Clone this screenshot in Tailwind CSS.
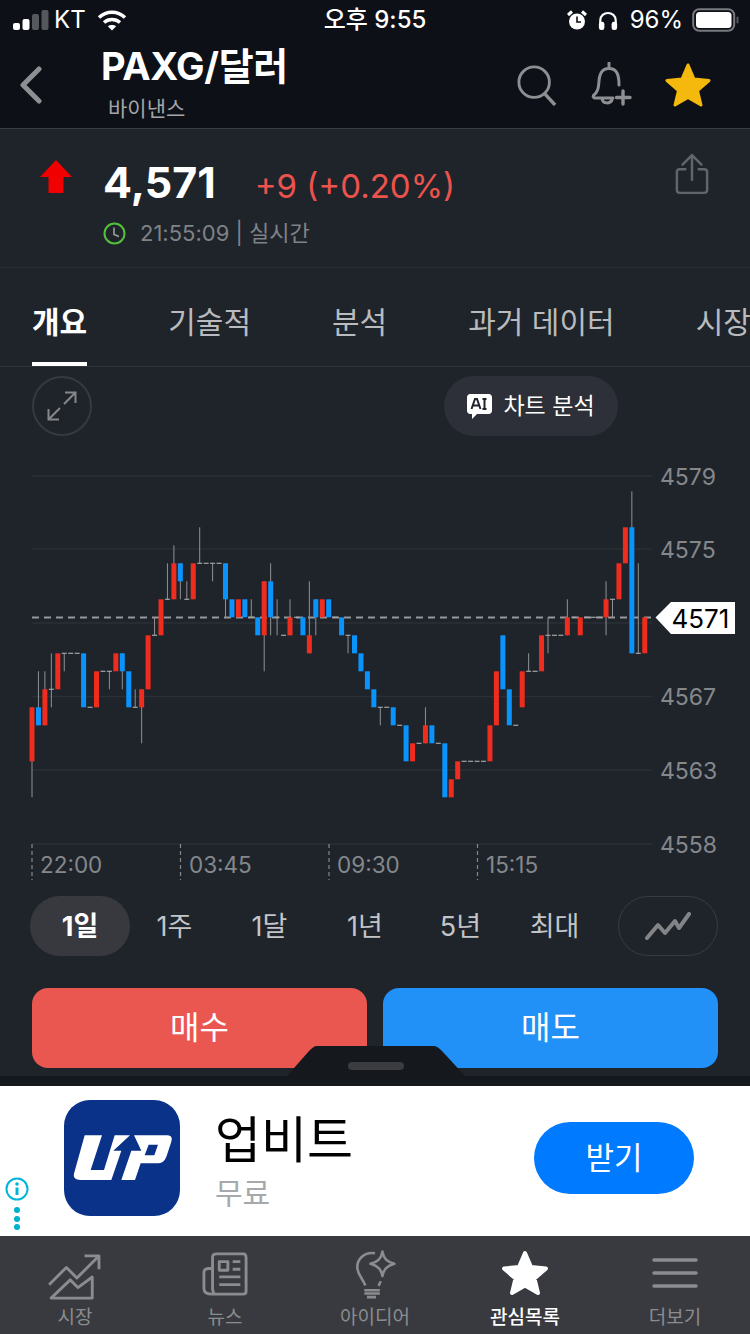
<!DOCTYPE html>
<html lang="ko">
<head>
    <meta charset="UTF-8">
    <meta name="viewport" content="width=device-width, initial-scale=1.0">
    <title>PAXG/달러</title>
    <script src="https://cdn.jsdelivr.net/npm/@tailwindcss/browser@4"></script>
</head>
<body class="bg-[#1f242b] font-['Inter','Noto_Sans_CJK_KR',sans-serif]">
<div class="relative w-[750px] h-[1334px] overflow-hidden flex flex-col bg-[#1f242b]">

    <!-- Status bar + header -->
    <header class="h-[129px] shrink-0 bg-[#0d1017] border-b border-[#3a3d42]">
        <div class="h-[40px] flex items-center justify-between text-white text-[24px] leading-none">
            <div class="w-[260px] flex items-center pl-[13px]">
                <svg width="36" height="20" viewBox="0 0 36 20" fill="#fff"><rect x="0" y="13" width="7" height="7" rx="2"/><rect x="9.5" y="9" width="7" height="11" rx="2"/><rect x="19" y="4" width="7" height="16" rx="2" fill="#55585c"/><rect x="28.5" y="0" width="7" height="20" rx="2" fill="#55585c"/></svg>
                <span class="ml-[5px]">KT</span>
                <svg class="ml-[11px]" width="30" height="21" viewBox="0 0 30 21" fill="none" stroke="#fff" stroke-width="3.4"><path d="M2 7.5C9.5 0.5 20.5 0.5 28 7.5"/><path d="M7 12.5C11.5 8.5 18.5 8.5 23 12.5"/><path d="M15 20.5L10.8 16.3C13 14.5 17 14.5 19.2 16.3Z" fill="#fff" stroke="none"/></svg>
            </div>
            <span class="text-[24px] font-medium">오후 9:55</span>
            <div class="w-[260px] flex items-center justify-end pr-[11px]">
                <svg width="20" height="21" viewBox="0 0 20 21" fill="#fff"><circle cx="10" cy="11.5" r="8"/><path d="M1 5L5 1.5M19 5L15 1.5" stroke="#fff" stroke-width="3"/><path d="M10 6.5V12H14" stroke="#0d1017" stroke-width="1.6" fill="none"/></svg>
                <svg class="ml-[11px]" width="20" height="21" viewBox="0 0 22 21" fill="none"><path d="M2.5 14V10.5C2.5 -0.5 19.5 -0.5 19.5 10.5V14" stroke="#fff" stroke-width="2.4"/><rect x="1" y="12" width="6" height="9" rx="2.5" fill="#fff"/><rect x="15" y="12" width="6" height="9" rx="2.5" fill="#fff"/></svg>
                <span class="ml-[12px]">96%</span>
                <svg class="ml-[9px]" width="47" height="24" viewBox="0 0 47 24" fill="none"><rect x="1.2" y="1.2" width="41" height="21.6" rx="6" stroke="#77797d" stroke-width="2"/><rect x="4" y="4" width="35.5" height="16" rx="3.5" fill="#fff"/><rect x="44.5" y="8.5" width="2" height="7" rx="1" fill="#55585c"/></svg>
            </div>
        </div>
        <div class="relative h-[88px] flex">
            <svg class="mt-[26px] ml-[19px]" width="24" height="38" viewBox="0 0 24 38" fill="none" stroke="#8d8f92" stroke-width="5" stroke-linecap="round" stroke-linejoin="round"><path d="M20 3L4 19L20 35"/></svg>
            <div class="ml-[58px] flex flex-col">
                <span class="text-white text-[38px] leading-[46px] mt-[3px] font-bold tracking-[-0.3px]">PAXG/달러</span>
                <span class="text-[#a3a5a8] text-[21px] leading-[26px] mt-[7px] ml-[7px]">바이낸스</span>
            </div>
            <div class="ml-auto mr-[39px] flex items-start">
                <svg class="mt-[24px]" width="40" height="42" viewBox="0 0 42 44" fill="none" stroke="#8d8f92" stroke-width="3"><circle cx="18" cy="19" r="16"/><path d="M29 31L40 43" stroke-width="3.6"/></svg>
                <svg class="ml-[32px] mt-[22px]" width="44" height="44" viewBox="0 0 44 44" fill="none" stroke="#8d8f92" stroke-width="3" stroke-linecap="round" stroke-linejoin="round"><path d="M20 1V5M6 32C12 27 8 18 12 11C15 5 25 5 28 11C30 15 30 18 30 23M6 32C3 34 4 36 7 36H24M13 37C14 42 21 42 23 38"/><path d="M34 29V42M27.500 35.500H41" stroke-width="3.4"/></svg>
                <svg class="ml-[32px] mt-[22px]" width="46" height="46" viewBox="0 0 46 46" fill="#f5b90d" stroke="#f5b90d" stroke-width="3" stroke-linejoin="round"><path d="M23 3L29 17L44 18.500L32.500 28.500L36 43L23 35.500L10 43L13.500 28.500L2 18.500L17 17Z"/></svg>
            </div>
        </div>
    </header>

    <!-- Quote -->
    <section class="h-[139px] shrink-0 border-b border-[#2a2e35] relative flex">
        <svg class="ml-[40px] mt-[31px]" width="32" height="33" viewBox="0 0 32 33" fill="#f00000"><path d="M16 0L32 17H23.500V33H8.500V17H0Z"/></svg>
        <div class="ml-[31px] flex flex-col">
            <div class="flex items-baseline mt-[25px]">
                <span class="text-white text-[43px] leading-[56px] font-bold">4,571</span>
                <span class="text-[#ec534d] text-[33px] ml-[39px] leading-[56px]">+9 (+0.20%)</span>
            </div>
            <div class="flex items-center mt-[6px]">
                <svg width="23" height="23" viewBox="0 0 23 23" fill="none" stroke="#54c03a" stroke-width="2"><circle cx="11.500" cy="11.500" r="10"/><path d="M11 5.500V12.500L16 14.500" stroke="#9aa09a" stroke-width="1.600"/></svg>
                <span class="ml-[14px] text-[#7f8286] text-[22px] leading-[26px]">21:55:09 | 실시간</span>
            </div>
        </div>
        <svg class="ml-auto mr-[41px] mt-[24px]" width="34" height="42" viewBox="0 0 36 44" fill="none" stroke="#62656a" stroke-width="2.600" stroke-linecap="round" stroke-linejoin="round"><path d="M18 2V28M8 12L18 2L28 12"/><path d="M11 17H5C3 17 2 18 2 20V39C2 41 3 42 5 42H31C33 42 34 41 34 39V20C34 18 33 17 31 17H25"/></svg>
    </section>

    <!-- Tabs -->
    <nav class="h-[99px] shrink-0 border-b border-[#2e3239] flex gap-[81px] pl-[32px] text-[30px] text-[#b9bbbe] whitespace-nowrap overflow-hidden">
        <div class="relative flex items-center text-white font-bold h-full pt-[10px]">개요<span class="absolute left-0 right-0 bottom-0 h-[4px] bg-white"></span></div>
        <div class="flex items-center pt-[10px]">기술적</div>
        <div class="flex items-center pt-[10px]">분석</div>
        <div class="flex items-center pt-[10px]">과거 데이터</div>
        <div class="flex items-center pt-[10px]">시장</div>
    </nav>

    <!-- Chart toolbar -->
    <div class="h-[93px] shrink-0 flex items-start pt-[9px] pl-[32px]">
        <div class="w-[60px] h-[60px] rounded-full border-2 border-[#363a40] flex items-center justify-center">
            <svg width="30" height="30" viewBox="0 0 30 30" fill="none" stroke="#85878a" stroke-width="2"><path d="M18 1.500H28.500V12M28.500 1.500L17 13M12 28.500H1.500V18M1.500 28.500L13 17"/></svg>
        </div>
        <div class="ml-[352px] w-[174px] h-[60px] rounded-full bg-[#2d3038] flex items-center justify-center">
            <svg width="25" height="25" viewBox="0 0 25 25"><path d="M3 0H22C23.500 0 25 1.500 25 3V17C25 18.500 23.500 20 22 20H10L5 25V20H3C1.500 20 0 18.500 0 17V3C0 1.500 1.500 0 3 0Z" fill="#fff"/><path d="M4.500 15L8 5H10L13.500 15M5.800 11.500H12.200M17.500 5V15M15.500 5H19.500M15.500 15H19.500" stroke="#1f242b" stroke-width="2" fill="none"/></svg>
            <span class="ml-[11px] text-white text-[23px] leading-none">차트 분석</span>
        </div>
    </div>

    <!-- Chart -->
    <svg id="chart" class="block shrink-0" width="750" height="420" viewBox="0 460 750 420"></svg>

    <!-- Period selector -->
    <div class="mt-[16px] h-[60px] shrink-0 relative flex text-[27px] text-[#c3c5c8] leading-none">
        <div class="ml-[30px] w-[100px] h-[60px] rounded-[30px] bg-[#38393e] flex items-center justify-center text-white font-bold">1일</div>
        <div class="w-[95px] -ml-[3px] flex items-center justify-center">1주</div>
        <div class="w-[95px] flex items-center justify-center">1달</div>
        <div class="w-[96px] flex items-center justify-center">1년</div>
        <div class="w-[95px] flex items-center justify-center">5년</div>
        <div class="w-[93px] flex items-center justify-center">최대</div>
        <div class="ml-auto mr-[32px] w-[100px] h-[60px] rounded-[30px] border border-[#383b41] flex items-center justify-center">
            <svg width="46" height="28" viewBox="0 0 46 28" fill="none" stroke="#828487" stroke-width="4" stroke-linecap="round" stroke-linejoin="round"><path d="M2 26L13 13L20 21L30 9L34 16L44 2"/></svg>
        </div>
    </div>

    <!-- Buy / sell -->
    <div class="mt-[32px] flex gap-[16px] px-[32px] shrink-0">
        <button class="flex-1 h-[80px] rounded-[16px] bg-[#ea5650] text-white text-[32px]">매수</button>
        <button class="flex-1 h-[80px] rounded-[16px] bg-[#2190f7] text-white text-[32px]">매도</button>
    </div>

    <!-- Ad -->
    <div class="mt-[8px] h-[10px] shrink-0 bg-[#15181c]"></div>
    <div class="relative h-[150px] shrink-0 bg-white flex items-center pb-[6px]">
        <svg class="ml-[64px]" width="116" height="116" viewBox="0 0 116 116">
            <rect width="116" height="116" rx="26" fill="#0a3289"/>
            <g transform="translate(0 30) scale(0.3333)">
                <path d="M62 16H114L80 120H120L152 16H198L148 62H172L142 150H50C30 150 26 140 32 124Z" fill="#fff"/>
                <path d="M210 16H306C324 16 326 24 321 38L308 78C302 94 294 100 278 100H230L213 150H172L202 62H232Z" fill="#fff"/>
                <path d="M254 44H282L271 76H242Z" fill="#0a3289"/>
            </g>
        </svg>
        <div class="ml-[35px] mt-[10px] flex flex-col">
            <span class="text-black text-[50px] leading-[56px] mt-[-4px]">업비트</span>
            <span class="text-[#a6a8ab] text-[30px] leading-[36px] mt-[7px]">무료</span>
        </div>
        <div class="ml-auto mr-[56px] w-[160px] h-[72px] rounded-full bg-[#007aff] flex items-center justify-center text-white text-[31px]">받기</div>
        <div class="absolute left-[5px] top-[91px] flex flex-col items-center">
            <svg width="24" height="24" viewBox="0 0 24 24" fill="none"><circle cx="12" cy="12" r="10.500" stroke="#00b6d8" stroke-width="2"/><circle cx="12" cy="7" r="1.800" fill="#00b6d8"/><path d="M12 10.500V18" stroke="#00b6d8" stroke-width="3"/></svg>
            <div class="mt-[6px] flex flex-col gap-[2.500px]">
                <div class="w-[6px] h-[6px] rounded-full bg-[#00b0d0]"></div>
                <div class="w-[6px] h-[6px] rounded-full bg-[#00b0d0]"></div>
                <div class="w-[6px] h-[6px] rounded-full bg-[#00b0d0]"></div>
            </div>
        </div>
    </div>

    <!-- Bottom tabs -->
    <nav class="flex-1 bg-[#383a3f] grid grid-cols-5 text-[19px] text-[#8b8c8f] leading-none">
        <div class="flex flex-col items-center">
            <svg class="mt-[18px]" width="54" height="46" viewBox="0 0 56 48" fill="none" stroke="#8b8c8f" stroke-width="3" stroke-linejoin="round"><path d="M1 32L19 14L30 25L53 2M38 2H53V16"/><path d="M3 46L23 27L31 35L46 24V46Z"/></svg>
            <span class="mt-[8px]">시장</span>
        </div>
        <div class="flex flex-col items-center">
            <svg class="mt-[16px]" width="46" height="46" viewBox="0 0 48 48" fill="none" stroke="#8b8c8f" stroke-width="3" stroke-linejoin="round"><path d="M11 44C7 44 2 43 2 38V21C2 18 4 17 11 17M11 44C14 44 11 42 11 38V6C11 3 12 2 15 2H43C45 2 46 3 46 6V41C46 43 45 44 43 44Z"/><path d="M18 10H27V19H18Z"/><path d="M32 10H40M32 18H40M18 26H40M18 34H40" stroke-width="3"/></svg>
            <span class="mt-[10px]">뉴스</span>
        </div>
        <div class="flex flex-col items-center">
            <svg class="mt-[14px]" width="42" height="50" viewBox="80 25 130 155" fill="none" stroke="#8b8c8f" stroke-width="8" stroke-linejoin="round"><path d="M145 35C110 30 90 55 90 78C90 100 105 110 115 135"/><path d="M168 30C172 52 182 62 205 68C182 74 172 84 168 106C164 84 154 74 131 68C154 62 164 52 168 30Z"/><path d="M163 122L156 136M112 150H160M112 160H160M120 171H148"/></svg>
            <span class="mt-[8px]">아이디어</span>
        </div>
        <div class="flex flex-col items-center text-white font-medium">
            <svg class="mt-[14px]" width="46" height="46" viewBox="0 0 46 46" fill="#fff" stroke="#fff" stroke-width="4" stroke-linejoin="round"><path d="M23 3L29 17L44 18.500L32.500 28.500L36 43L23 35.500L10 43L13.500 28.500L2 18.500L17 17Z"/></svg>
            <span class="mt-[12px]">관심목록</span>
        </div>
        <div class="flex flex-col items-center">
            <svg class="mt-[22px]" width="46" height="30" viewBox="0 0 46 30" fill="none" stroke="#8b8c8f" stroke-width="3.500" stroke-linecap="round"><path d="M2 2H44M2 15H44M2 28H44"/></svg>
            <span class="mt-[20px]">더보기</span>
        </div>
    </nav>

    <!-- Bottom sheet handle, sits over the buttons -->
    <svg class="absolute left-[287px] top-[1046px]" width="180" height="30" viewBox="0 0 180 30" fill="#15181c"><path d="M0 30L22 5C25 2 27 0 30 0H146C150 0 152 2 155 5L178 30Z"/></svg>
    <div class="absolute left-[348px] top-[1062px] w-[56px] h-[8px] rounded-full bg-[#3a3c40]"></div>
</div>

<script>
    // r/b = [type, bodyTop, bodyBottom, wickTop, wickBottom], d = [type, level, wickTop, wickBottom]
    // levels are counted in price steps away from the current price line
    const candles = [
        ["r",5,8,5,10],["b",5,6,3,6],["r",4,6,3,6],["d",4,2,5],["r",2,4,2,4],["d",2,2,3],["d",2,2,2],["d",2,2,2],
        ["b",2,5,2,5],["d",5,5,5],["r",3,5,3,5],["d",3,3,3],["d",3,3,4],["r",2,3,2,3],["b",2,3,2,4],["b",3,5,3,5],
        ["d",5,4,5],["r",4,5,4,7],["r",1,4,1,4],["d",1,0,1],["r",-1,1,-1,1],["d",-1,-3,-1],["r",-3,-1,-4,-1],["b",-3,-2,-3,-1],
        ["d",-1,-2,-1],["r",-3,-1,-3,-1],["d",-3,-5,-3],["d",-3,-3,-3],["d",-3,-3,-2],["d",-3,-3,-3],["b",-3,-1,-3,0],["b",-1,0,-1,0],
        ["r",-1,0,-1,0],["b",-1,0,-1,0],["d",0,-1,0],["b",0,1,0,1],["r",-2,1,-2,3],["b",-2,0,-3,1],["d",0,-1,1],["d",1,1,1],
        ["r",0,1,-1,1],["d",0,0,0],["b",0,1,0,1],["r",1,2,-2,2],["b",-1,0,-1,1],["r",-1,0,-1,0],["b",-1,0,-1,0],["d",0,0,0],
        ["b",0,1,0,1],["d",1,1,2],["b",1,2,1,2],["b",2,3,2,3],["b",3,4,3,4],["b",4,5,4,5],["d",5,5,6],["d",5,5,5],
        ["b",5,6,5,6],["d",6,6,6],["b",6,8,6,8],["r",7,8,7,8],["d",7,7,7],["r",6,7,5,7],["b",6,7,6,7],["d",7,7,7],
        ["b",7,10,7,10],["r",9,10,9,10],["r",8,9,8,9],["d",8,8,8],["d",8,8,8],["d",8,8,8],["d",8,8,8],["r",6,8,6,8],
        ["r",3,6,3,6],["b",1,4,1,4],["b",4,6,4,6],["d",6,6,6],["r",3,5,3,5],["d",3,2,3],["d",3,3,3],["r",1,3,1,3],
        ["d",1,0,2],["d",1,1,1],["d",1,1,1],["r",0,1,-1,1],["d",0,0,0],["r",0,1,0,1],["d",0,0,0],["d",0,0,0],
        ["d",0,0,0],["r",-1,0,-2,1],["d",-1,-1,0],["r",-3,-1,-3,-1],["r",-5,-3,-5,-3],["b",-5,2,-7,2],["d",2,-3,2],["r",0,2,0,2]
    ];
    const level = n => 617.3 + 18 * n;
    let svg = "";

    [[476,"4579"],[549,"4575"],[623,""],[696.5,"4567"],[770,"4563"],[844,"4558"]].forEach(([y, label]) => {
        svg += `<line x1="32" x2="652" y1="${y}" y2="${y}" stroke="#2b2f36" stroke-width="1.500"/>`;
        if (label) svg += `<text x="660" y="${y + 8.5}" font-size="23" fill="#85888b">${label}</text>`;
    });

    [[32,"22:00",40],[180.5,"03:45",189],[329,"09:30",337],[477.500,"15:15",486]].forEach(([x, label, tx]) => {
        svg += `<line x1="${x}" x2="${x}" y1="844" y2="880" stroke="#85888b" stroke-width="1.200" stroke-dasharray="4 3"/>`;
        svg += `<text x="${tx}" y="873" font-size="22.500" fill="#85888b">${label}</text>`;
    });

    svg += `<line x1="32" x2="654" y1="617.500" y2="617.500" stroke="#96989b" stroke-width="1.800" stroke-dasharray="7 5"/>`;

    candles.forEach((c, i) => {
        const x = 32 + 6.45 * i;
        if (c[0] === "d") {
            if (c[2] !== c[3]) svg += `<line x1="${x}" x2="${x}" y1="${level(c[2])}" y2="${level(c[3])}" stroke="#8f9194" stroke-width="1"/>`;
            svg += `<line x1="${x - 2.5}" x2="${x + 2.5}" y1="${level(c[1])}" y2="${level(c[1])}" stroke="#a2a4a6" stroke-width="1.200"/>`;
        } else {
            if (c[3] !== c[1] || c[4] !== c[2]) svg += `<line x1="${x}" x2="${x}" y1="${level(c[3])}" y2="${level(c[4])}" stroke="#8f9194" stroke-width="1"/>`;
            const fill = c[0] === "r" ? "#ee2d1f" : "#0a93fb";
            svg += `<rect x="${x - 2.5}" y="${level(c[1])}" width="5" height="${level(c[2]) - level(c[1])}" fill="${fill}"/>`;
        }
    });

    svg += `<path d="M655.500 617.500L671 602H735V634H671Z" fill="#fff"/>`;
    svg += `<text x="671.500" y="627.500" font-size="26" fill="#000">4571</text>`;
    document.getElementById("chart").innerHTML = svg;
</script>
</body>
</html>
